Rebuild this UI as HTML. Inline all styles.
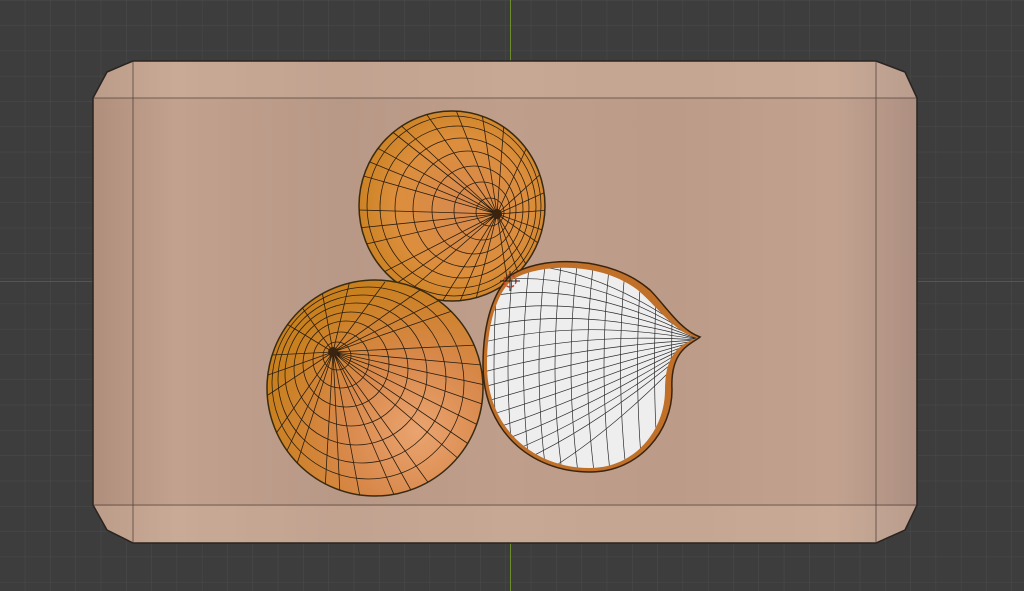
<!DOCTYPE html>
<html><head><style>
html,body{margin:0;padding:0;background:#3d3d3d;overflow:hidden}
svg{display:block}
</style></head><body>
<svg width="1024" height="591" viewBox="0 0 1024 591" xmlns="http://www.w3.org/2000/svg">
<defs>
<pattern id="grid" width="25.3" height="25.3" patternUnits="userSpaceOnUse" x="0" y="0.5">
<path d="M25.3 0V25.3M0 25.3H25.3" stroke="#4b4b4b" stroke-width="1" fill="none"/>
</pattern>
<linearGradient id="wood" x1="0" x2="1" y1="0" y2="0">
<stop offset="0" stop-color="#b08e7c"/><stop offset="0.1" stop-color="#c2a28e"/>
<stop offset="0.3" stop-color="#b89886"/><stop offset="0.5" stop-color="#bf9f8b"/>
<stop offset="0.7" stop-color="#bc9c88"/><stop offset="0.9" stop-color="#c2a28f"/>
<stop offset="1" stop-color="#ad8f82"/></linearGradient>
<radialGradient id="on1" cx="0.55" cy="0.5" r="0.6">
<stop offset="0" stop-color="#d88a50"/><stop offset="0.6" stop-color="#dc8e3c"/><stop offset="1" stop-color="#c8801e"/></radialGradient>
<radialGradient id="on2" cx="0.7" cy="0.7" r="0.7">
<stop offset="0" stop-color="#eaa470"/><stop offset="0.5" stop-color="#d8884a"/><stop offset="1" stop-color="#c9801e"/></radialGradient>
<clipPath id="board"><path d="M93 98 L107 72 L133 61 L876 61 L905 72 L917 98 L917 505 L905 530 L876 543 L133 543 L107 530 L93 505Z"/></clipPath>
<clipPath id="c1"><ellipse cx="452" cy="206" rx="93" ry="95"/></clipPath>
<clipPath id="c2"><ellipse cx="375" cy="388" rx="108" ry="108"/></clipPath>
<clipPath id="c3"><path d="M512 280 C540 262 605 262 640 292 C660 310 675 332 697 338 C675 345 665 360 665 390 C665 430 635 468 590 468 C533 468 487 428 487 365 C487 322 498 292 512 280Z"/></clipPath>
</defs>
<rect width="1024" height="591" fill="#3d3d3d"/>
<rect width="1024" height="591" fill="url(#grid)"/>
<line x1="510.5" y1="0" x2="510.5" y2="591" stroke="#6c8a2e" stroke-width="1"/>
<line x1="0" y1="281.5" x2="1024" y2="281.5" stroke="#8f3a46" stroke-width="1"/>
<path d="M93 98 L107 72 L133 61 L876 61 L905 72 L917 98 L917 505 L905 530 L876 543 L133 543 L107 530 L93 505Z" fill="url(#wood)"/>
<g clip-path="url(#board)">
<rect x="90" y="60" width="830" height="38" fill="#d6bcaa" opacity="0.3"/>
<rect x="90" y="506" width="830" height="38" fill="#d6bcaa" opacity="0.3"/>
</g>
<path d="M93 98 L107 72 L133 61 L876 61 L905 72 L917 98 L917 505 L905 530 L876 543 L133 543 L107 530 L93 505Z" fill="none" stroke="#2a2420" stroke-width="1.5"/>
<path d="M93 98H917M93 505H917M133 61V543M876 61V543" stroke="#3a302a" stroke-width="0.8" fill="none" opacity="0.8"/>
<!-- onion 1 -->
<ellipse cx="452" cy="206" rx="93" ry="95" fill="url(#on1)" stroke="#3a2a10" stroke-width="1.5"/>
<g clip-path="url(#c1)" stroke="#2a1e10" stroke-width="0.8" fill="none">
<path d="M497 214L452 100M497 214L420 105M497 214L395 120M497 214L372 145M497 214L360 175M497 214L358 210M497 214L362 245M497 214L378 275M497 214L405 295M497 214L440 305M497 214L475 303M497 214L510 298M497 214L535 280M497 214L548 250M497 214L550 210M497 214L545 170M497 214L530 140M497 214L505 110M497 214L480 100M497 214L390 130M497 214L365 160M497 214L358 228M497 214L390 288M497 214L458 306M497 214L525 292M497 214L548 232M497 214L550 190"/>
<ellipse cx="490" cy="212" rx="14" ry="14"/><ellipse cx="482" cy="211" rx="28" ry="29"/><ellipse cx="474" cy="210" rx="42" ry="44"/><ellipse cx="468" cy="209" rx="55" ry="58"/><ellipse cx="462" cy="208" rx="67" ry="70"/><ellipse cx="458" cy="207" rx="78" ry="81"/><ellipse cx="454" cy="206" rx="87" ry="90"/>
</g>
<circle cx="497" cy="214" r="5" fill="#3a2410"/>
<!-- onion 2 -->
<ellipse cx="375" cy="388" rx="108" ry="108" fill="url(#on2)" stroke="#3a2a10" stroke-width="1.5"/>
<g clip-path="url(#c2)" stroke="#2a1e10" stroke-width="0.8" fill="none">
<path d="M333 352L290 290M333 352L320 280M333 352L350 280M333 352L385 282M333 352L420 290M333 352L455 310M333 352L478 345M333 352L485 385M333 352L478 425M333 352L460 460M333 352L430 485M333 352L395 497M333 352L360 497M333 352L325 490M333 352L295 470M333 352L275 435M333 352L268 395M333 352L272 355M333 352L280 320M333 352L268 375M333 352L440 300M333 352L482 365M333 352L485 405M333 352L470 445M333 352L412 492M333 352L340 495M333 352L285 455"/>
<circle cx="337" cy="356" r="14"/><circle cx="341" cy="360" r="28"/><circle cx="346" cy="364" r="43"/><circle cx="351" cy="369" r="57"/><circle cx="356" cy="374" r="71"/><circle cx="362" cy="379" r="84"/><circle cx="368" cy="383" r="96"/>
</g>
<circle cx="333" cy="352" r="5" fill="#3a2410"/>
<!-- white onion -->
<path d="M510 276 C540 255 610 255 650 290 C665 305 680 330 700 337 C690 345 670 350 672 390 C672 430 640 472 590 472 C530 472 483 430 483 365 C483 320 495 290 510 276Z" fill="#c07028" stroke="#3a2410" stroke-width="1.5"/>
<path d="M512 280 C540 262 605 262 640 292 C660 310 675 332 697 338 C675 345 665 360 665 390 C665 430 635 468 590 468 C533 468 487 428 487 365 C487 322 498 292 512 280Z" fill="#eeeeef"/>
<g clip-path="url(#c3)" stroke="#2b2b2b" stroke-width="0.7" fill="none">
<path d="M700 340 Q580 250 480 268M700 340 Q580 262 480 283M700 340 Q580 276 480 298M700 340 Q580 290 480 313M700 340 Q580 304 480 328M700 340 Q580 318 480 343M700 340 Q580 332 480 358M700 340 Q580 346 480 373M700 340 Q580 360 480 388M700 340 Q580 374 480 403M700 340 Q580 388 480 418M700 340 Q580 402 480 433M700 340 Q580 416 480 448M700 340 Q580 430 480 463M700 340 Q580 444 480 478M700 340 Q590 458 500 495"/>
<path d="M500 250Q488 366 500 480M515 250Q501 366 515 480M531 250Q516 366 531 480M547 250Q531 366 547 480M563 250Q547 366 563 480M579 250Q563 366 579 480M595 250Q580 366 595 480M611 250Q597 366 611 480M627 250Q614 366 627 480M643 250Q632 366 643 480M659 250Q650 366 659 480M675 250Q668 366 675 480"/>
</g>
<circle cx="510" cy="281" r="6" fill="none" stroke="#c04030" stroke-width="1.5" stroke-dasharray="3 2"/>
<path d="M500 281H520M510 271V291" stroke="#222" stroke-width="1"/>
</svg>
</body></html>
